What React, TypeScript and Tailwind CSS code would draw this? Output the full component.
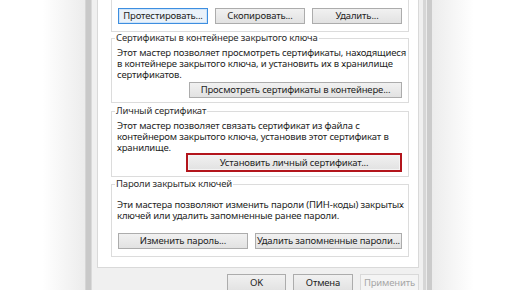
const font = { fontFamily: '"Noto Sans", "Open Sans", sans-serif' };

type BtnProps = { label: string; className?: string };

const WinButton = ({ label, className = "" }: BtnProps) => (
  <div
    className={`flex h-[16px] items-center justify-center border border-[#acacac] bg-gradient-to-b from-[#f1f1f1] to-[#e2e2e2] text-[9.5px] leading-none tracking-[-0.15px] text-[#1e1e1e] whitespace-nowrap ${className}`}
  >
    {label}
  </div>
);

const GroupTitle = ({ text }: { text: string }) => (
  <div className="-mt-[7px] ml-[3px] h-[12px] w-fit bg-white px-[1px] text-[9.5px] leading-[12px] tracking-[-0.15px] text-[#2e2e2e] whitespace-nowrap">
    {text}
  </div>
);

const Lines = ({ lines, className = "" }: { lines: string[]; className?: string }) => (
  <div className={`pl-[5px] text-[9.5px] tracking-[-0.15px] text-[#1e1e1e] ${className}`}>
    {lines.map((l) => (
      <div key={l} className="whitespace-nowrap">
        {l}
      </div>
    ))}
  </div>
);

export default function App() {
  return (
    <div className="flex h-[290px] w-[516px] overflow-hidden bg-white" style={font}>
      {/* outside, left */}
      <div className="w-[85px] bg-gradient-to-r from-white via-white to-[#ececec]" />
      {/* window frame, left */}
      <div className="flex">
        <div className="w-[1px] bg-[#d6d6d6]" />
        <div className="w-[5px] bg-[#c9c9c9]" />
        <div className="w-[1px] bg-[#dadada]" />
      </div>

      {/* dialog body */}
      <div className="flex w-[331px] flex-col bg-[#f0f0f0]">
        <div className="ml-[5px] w-[322px] border-x border-b border-[#d9d9d9] bg-white pb-[10px] pl-[13px] pr-[9px]">
          {/* top group, cut off */}
          <div className="border-x border-b border-[#dcdcdc] px-[6px] pb-[7px] pt-[8px]">
            <div className="grid grid-cols-3 gap-[7px]">
              <div className="flex h-[16px] items-center justify-center border border-[#3d8ee0] bg-[#eaf2fa] text-[9.5px] leading-none tracking-[-0.15px] text-[#1e1e1e] shadow-[inset_0_0_0_1px_#cfe4f8] whitespace-nowrap">
                Протестировать...
              </div>
              <WinButton label="Скопировать..." />
              <WinButton label="Удалить..." />
            </div>
          </div>

          {/* certificates in container */}
          <div className="mt-[6px] flex flex-col border border-[#dcdcdc] pb-[4px] pr-[6px]">
            <GroupTitle text="Сертификаты в контейнере закрытого ключа" />
            <Lines
              className="mt-[3px] leading-[11px]"
              lines={[
                "Этот мастер позволяет просмотреть сертификаты, находящиеся",
                "в контейнере закрытого ключа, и установить их в хранилище",
                "сертификатов.",
              ]}
            />
            <WinButton label="Просмотреть сертификаты в контейнере..." className="mt-[2px] w-[213px] self-end" />
          </div>

          {/* personal certificate */}
          <div className="mt-[8px] flex flex-col border border-[#dcdcdc] pb-[4px] pr-[6px]">
            <GroupTitle text="Личный сертификат" />
            <Lines
              className="mt-[3px] leading-[11px]"
              lines={[
                "Этот мастер позволяет связать сертификат из файла с",
                "контейнером закрытого ключа, установив этот сертификат в",
                "хранилище.",
              ]}
            />
            <div className="flex h-[19px] w-[216px] items-center justify-center self-end border-2 border-[#b3151c] bg-gradient-to-b from-[#f1f1f1] to-[#e2e2e2] text-[9.5px] leading-none tracking-[-0.15px] text-[#1e1e1e] shadow-[inset_0_0_0_1px_#f4f4f4] whitespace-nowrap">
              Установить личный сертификат...
            </div>
          </div>

          {/* passwords */}
          <div className="mt-[7px] flex flex-col border border-[#dcdcdc] pb-[7px] pl-[6px] pr-[6px]">
            <div className="-ml-[6px]">
              <GroupTitle text="Пароли закрытых ключей" />
            </div>
            <Lines
              className="-ml-[6px] mt-[10px] leading-[10.5px]"
              lines={[
                "Эти мастера позволяют изменить пароли (ПИН-коды) закрытых",
                "ключей или удалить запомненные ранее пароли.",
              ]}
            />
            <div className="mt-[12px] flex gap-[7px]">
              <WinButton label="Изменить пароль..." className="w-[130px]" />
              <WinButton label="Удалить запомненные пароли..." className="w-[147px]" />
            </div>
          </div>
        </div>

        {/* dialog buttons */}
        <div className="mt-[6px] flex justify-end gap-[7px] pr-[4px]">
          <WinButton label="OK" className="h-[18px] w-[59px]" />
          <WinButton label="Отмена" className="h-[18px] w-[60px]" />
          <div className="flex h-[18px] w-[59px] items-center justify-center border border-[#d9d9d9] bg-[#f4f4f4] text-[9.5px] leading-none tracking-[-0.15px] text-[#a6a6a6]">
            Применить
          </div>
        </div>
      </div>

      {/* window frame, right */}
      <div className="flex">
        <div className="w-[3px] bg-[#d6d6d6]" />
        <div className="w-[1px] bg-[#ececec]" />
        <div className="w-[5px] bg-[#cbcbcb]" />
      </div>
      {/* outside, right */}
      <div className="flex-1 bg-gradient-to-r from-[#ececec] via-white to-white" />
    </div>
  );
}
